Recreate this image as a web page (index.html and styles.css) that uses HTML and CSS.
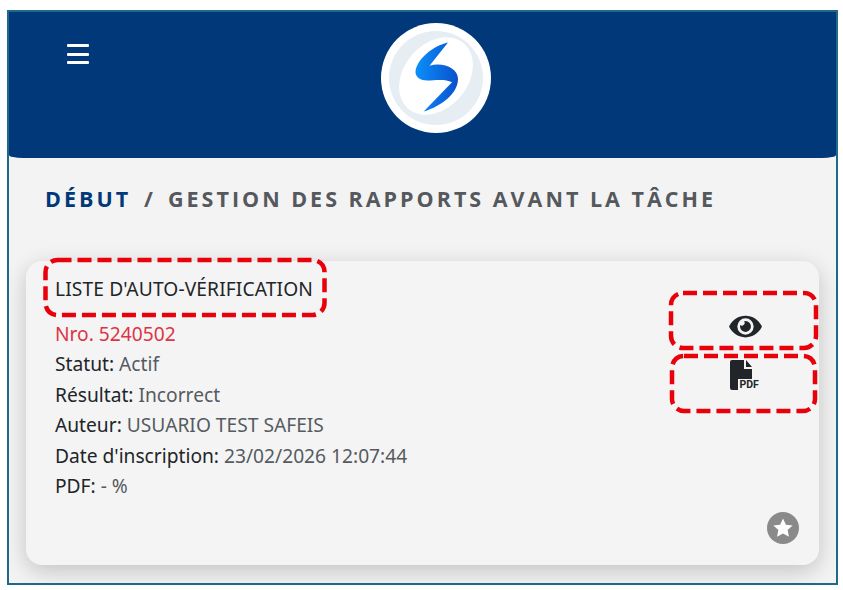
FILE: index.html
```html
<!DOCTYPE html>
<html>
<head>
  <title>Gestion des rapports avant la tâche</title>
  <link rel="stylesheet" href="styles.css">
</head>
<body>
  <div class="frame">
    <!-- HEADER -->
    <header class="topbar">
      <div class="burger"><span></span><span></span><span></span></div>
      <svg class="logo" viewBox="0 0 110 110">
        <defs>
          <linearGradient id="logoBlue" x1="0" y1="0" x2="1" y2="0">
            <stop offset="0" stop-color="#0a90fa"/>
            <stop offset="1" stop-color="#0a50cc"/>
          </linearGradient>
        </defs>
        <circle cx="55" cy="55" r="55" fill="#fff"/>
        <circle cx="55" cy="55" r="47" fill="#e6edf3"/>
        <ellipse cx="55" cy="53" rx="43" ry="32" transform="rotate(-50 55 53)" fill="#fff"/>
        <path fill="url(#logoBlue)" d="M67 19.500C52 23 37 35 34.500 48C34 54.500 40 57.500 46 57.500C54 57.500 64 55.500 71 59.300L42.700 88.500C61 83 77 70 77 56C77 45 62 39 48.500 42.700Z"/>
      </svg>
    </header>

    <!-- CONTENT -->
    <main class="content">
      <h1 class="crumbs"><span class="crumb-home">DÉBUT</span><span class="crumb-sep">/</span><span>GESTION DES RAPPORTS AVANT LA TÂCHE</span></h1>

      <div class="card">
        <div class="card-info">
          <div class="card-title">LISTE D'AUTO-VÉRIFICATION</div>
          <div class="card-number">Nro. 5240502</div>
          <div class="row"><b>Statut:</b> Actif</div>
          <div class="row"><b>Résultat:</b> Incorrect</div>
          <div class="row"><b>Auteur:</b> USUARIO TEST SAFEIS</div>
          <div class="row"><b>Date d'inscription:</b> 23/02/2026 12:07:44</div>
          <div class="row"><b>PDF:</b> - %</div>
        </div>
        <div class="card-actions">
          <svg class="icon-eye" viewBox="0 0 576 512"><path d="M572.52 241.4C518.29 135.59 410.93 64 288 64S57.68 135.64 3.48 241.41a32.35 32.35 0 0 0 0 29.19C57.71 376.41 165.07 448 288 448s230.32-71.64 284.52-177.41a32.35 32.35 0 0 0 0-29.19zM288 400a144 144 0 1 1 144-144 143.93 143.93 0 0 1-144 144zm0-240a95.31 95.31 0 0 0-25.31 3.79 47.85 47.85 0 0 1-66.9 66.9A95.78 95.78 0 1 0 288 160z"/></svg>
          <svg class="icon-pdf" viewBox="0 0 30 30">
            <path d="M0 2Q0 0 2 0H14V9H22V19H8V30H2Q0 30 0 28Z"/>
            <path d="M16 0L22 7H16Z"/>
            <text x="9.500" y="28">PDF</text>
          </svg>
          <div class="fav">
            <svg viewBox="0 0 24 24"><path d="M12 2.500l2.900 6.200 6.700.8-5 4.600 1.400 6.700-6-3.400-6 3.400 1.400-6.700-5-4.600 6.700-.8z"/></svg>
          </div>
        </div>
      </div>
    </main>
  </div>

  <!-- red annotations drawn over the capture -->
  <svg class="marks" viewBox="0 0 843 590">
    <rect x="45.500" y="260" width="279" height="55" rx="12"/>
    <rect x="671" y="293" width="145" height="55" rx="12"/>
    <rect x="672" y="356" width="143" height="55" rx="12"/>
  </svg>
</body>
</html>
```

FILE: styles.css
```css
html, body { margin: 0; height: 100%; }
body {
  position: relative;
  background: #fff;
  font-family: "Noto Sans", "Open Sans", sans-serif;
  overflow: hidden;
  padding: 10px 5px 5px 7px;
  box-sizing: border-box;
}

.frame {
  height: 100%;
  box-sizing: border-box;
  border: 2px solid #1f6a8c;
  display: flex;
  flex-direction: column;
  background: #f3f3f3;
}

/* Header */
.topbar {
  height: 146px;
  flex-shrink: 0;
  background: #00387a;
  border-radius: 0 0 14px 14px / 0 0 3px 3px;
  position: relative;
  display: flex;
  justify-content: center;
  padding: 11px 0 0 27px;
  box-sizing: border-box;
}
.burger {
  position: absolute;
  left: 58px;
  top: 32px;
  width: 22px;
  display: flex;
  flex-direction: column;
  gap: 5.5px;
}
.burger span { height: 3px; background: #fff; border-radius: 1px; }
.logo { width: 110px; height: 110px; }

/* Content */
.content {
  flex: 1;
  display: flex;
  flex-direction: column;
  padding: 26px 17px 18px 17px;
}
.crumbs {
  margin: 0 0 0 19px;
  font-family: "Open Sans", sans-serif;
  font-size: 21.500px;
  line-height: 30px;
  font-weight: 700;
  letter-spacing: 3px;
  color: #55585c;
  white-space: nowrap;
}
.crumb-home { color: #00387a; }
.crumb-sep { margin: 0 12px 0 13px; }

.card {
  flex: 1;
  margin-top: 47px;
  background: #f4f4f4;
  border-radius: 16px;
  box-shadow: 0 6px 22px rgba(0,0,0,0.2);
  display: flex;
  justify-content: space-between;
  padding: 14px 0 21px 29px;
}
.card-title { font-size: 19.200px; line-height: 28px; letter-spacing: 0.120px; color: #212529; margin-bottom: 16px; }
.card-number { font-size: 19.200px; line-height: 30.400px; color: #dc3545; }
.row { font-size: 19.200px; line-height: 30.400px; color: #555b61; }
.row b { font-weight: 400; color: #212529; }

.card-actions {
  width: 148px;
  display: flex;
  flex-direction: column;
  align-items: center;
}
.icon-eye { width: 33px; height: 29px; margin-top: 37px; fill: #212529; }
.icon-pdf { width: 30px; height: 30px; margin-top: 19px; fill: #212529; }
.icon-pdf text { font-family: "Roboto", sans-serif; font-size: 10.500px; font-weight: 700; }
.fav {
  margin-top: auto;
  align-self: flex-end;
  margin-right: 20px;
  width: 32px;
  height: 32px;
  border-radius: 50%;
  background: #8a8a8a;
  display: flex;
  align-items: center;
  justify-content: center;
}
.fav svg { width: 24px; height: 24px; fill: #fff; }

.marks {
  position: absolute;
  left: 0;
  top: 0;
  width: 843px;
  height: 590px;
  fill: none;
  stroke: #e8000b;
  stroke-width: 4.500;
  stroke-dasharray: 14 6;
}
```
